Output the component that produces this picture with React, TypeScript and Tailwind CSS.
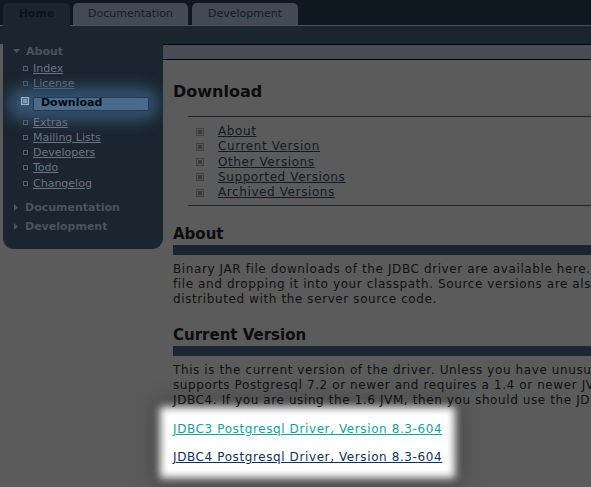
const SIDE_LINKS_TOP = ['Index', 'License']
const SIDE_LINKS_BOTTOM = ['Extras', 'Mailing Lists', 'Developers', 'Todo', 'Changelog']
const TOC = ['About', 'Current Version', 'Other Versions', 'Supported Versions', 'Archived Versions']

function Arrow({ down }: { down?: boolean }) {
  return (
    <svg width="7" height="7" viewBox="0 0 7 7" className="shrink-0">
      {down ? <polygon points="0,1 7,1 3.5,5" fill="#4a545e" /> : <polygon points="1,0 5,3.5 1,7" fill="#4a545e" />}
    </svg>
  )
}

function SideLink({ label }: { label: string }) {
  return (
    <div className="flex items-center leading-[15.25px]">
      <span className="w-[5px] h-[5px] border border-[#56606b] ml-[20px] mr-[5px]" />
      <a className="underline text-[#6b7580]">{label}</a>
    </div>
  )
}

function Bar() {
  return <div className="h-[10px] bg-[#1c2631] mt-[2px]" />
}

export default function App() {
  return (
    <div className="w-[591px] h-[487px] overflow-hidden bg-[#5b5b5b] font-['DejaVu_Sans',sans-serif] text-[11px] text-[#111]">

      {/* ── Tabs ─────────────────────────────── */}
      <div className="h-[26px] bg-[#0f1821] flex items-end gap-[3px] pl-[3px] border-b border-[#4b525b]">
        <div className="w-[67px] h-[23px] -mb-px bg-[#1b2530] rounded-t-[5px] flex items-center justify-center font-bold text-[#0c141d]">Home</div>
        <div className="w-[115px] h-[22px] bg-[#434a55] rounded-t-[5px] flex items-center justify-center text-[#141c26]">Documentation</div>
        <div className="w-[106px] h-[22px] ml-[1px] bg-[#434a55] rounded-t-[5px] flex items-center justify-center text-[#141c26]">Development</div>
      </div>
      <div className="h-[18px] bg-[#1b2530]" />

      <div className="flex">
        {/* ── Sidebar ──────────────────────────── */}
        <div className="w-[160px] ml-[3px] h-[205px] shrink-0 bg-[#1b2530] rounded-b-[11px] flex flex-col">
          <div className="flex items-center leading-[15px] font-bold text-[#4a545e] pl-[10px] gap-[6px]">
            <Arrow down />About
          </div>
          <div className="mt-[2px]">
            {SIDE_LINKS_TOP.map(l => <SideLink key={l} label={l} />)}
          </div>
          <div className="mt-[5px] mx-[14px] flex items-center rounded-full bg-[#34506c] shadow-[0_0_14px_10px_#34506c]">
            <span className="w-[8px] h-[8px] border border-[#9ab4cc] bg-[#4d6d8c] ml-[4px] -mt-[6px] flex items-center justify-center">
              <span className="w-[4px] h-[4px] bg-[#7d9ab6]" />
            </span>
            <div className="ml-[4px] w-[117px] h-[14px] bg-[#4a6b8b] border border-[#233a52] flex items-center pl-[7px] font-bold text-[#050a10]">Download</div>
          </div>
          <div className="mt-[4px]">
            {SIDE_LINKS_BOTTOM.map(l => <SideLink key={l} label={l} />)}
          </div>
          <div className="mt-[9px] flex items-center leading-[15px] font-bold text-[#4a545e] pl-[10px] gap-[5px]">
            <Arrow />Documentation
          </div>
          <div className="mt-[4px] flex items-center leading-[15px] font-bold text-[#4a545e] pl-[10px] gap-[5px]">
            <Arrow />Development
          </div>
        </div>

        {/* ── Main ─────────────────────────────── */}
        <div className="flex-1 min-w-0">
          <div className="h-[16px] bg-[#474c56] border-y border-black" />
          <div className="pl-[10px] text-[12px] tracking-[0.6px]">
            <h1 className="mt-[22px] text-[16px] leading-[20px] tracking-normal font-bold text-[#0d0d0d]">Download</h1>

            <div className="ml-[15px] mt-[14px] border-y border-[#1c2631] pt-[7px] pb-[5px]">
              {TOC.map(t => (
                <div key={t} className="flex items-center leading-[15.25px]">
                  <span className="ml-[8px] mr-[14px] w-[8px] h-[8px] border border-[#444] bg-[#555] flex items-center justify-center">
                    <span className="w-[4px] h-[4px] bg-[#3c3c3c]" />
                  </span>
                  <a className="underline text-[#101a28]">{t}</a>
                </div>
              ))}
            </div>

            <h2 className="mt-[19px] text-[15px] leading-[18px] tracking-normal font-bold text-[#0d0d0d]">About</h2>
            <Bar />
            <p className="mt-[7px] leading-[15px] whitespace-nowrap">
              Binary JAR file downloads of the JDBC driver are available here. Because Java is platform neutral, it is a simple matter of just downloading the appropriate JAR<br />
              file and dropping it into your classpath. Source versions are also available here for recent driver versions and older versions are<br />
              distributed with the server source code.
            </p>

            <h2 className="mt-[19px] text-[15px] leading-[18px] tracking-normal font-bold text-[#0d0d0d]">Current Version</h2>
            <Bar />
            <p className="mt-[7px] leading-[15px] whitespace-nowrap">
              This is the current version of the driver. Unless you have unusual requirements (running old applications or JVMs), this is the driver you should be using. It<br />
              supports Postgresql 7.2 or newer and requires a 1.4 or newer JVM. It contains support for SSL and the javax.sql package. It comes in two flavours, JDBC3 and<br />
              JDBC4. If you are using the 1.6 JVM, then you should use the JDBC4 version.
            </p>

            <div className="mt-[7px] -ml-[5px] w-fit bg-white px-[5px] pt-[7px] pb-[5px] flex flex-col gap-[13px] leading-[15px] shadow-[0_0_8px_8px_#fff,0_0_20px_14px_rgba(0,0,0,0.25)]">
              <a className="underline text-[#12a0a0]">JDBC3 Postgresql Driver, Version 8.3-604</a>
              <a className="underline text-[#122e5a]">JDBC4 Postgresql Driver, Version 8.3-604</a>
            </div>
          </div>
        </div>
      </div>
    </div>
  )
}
